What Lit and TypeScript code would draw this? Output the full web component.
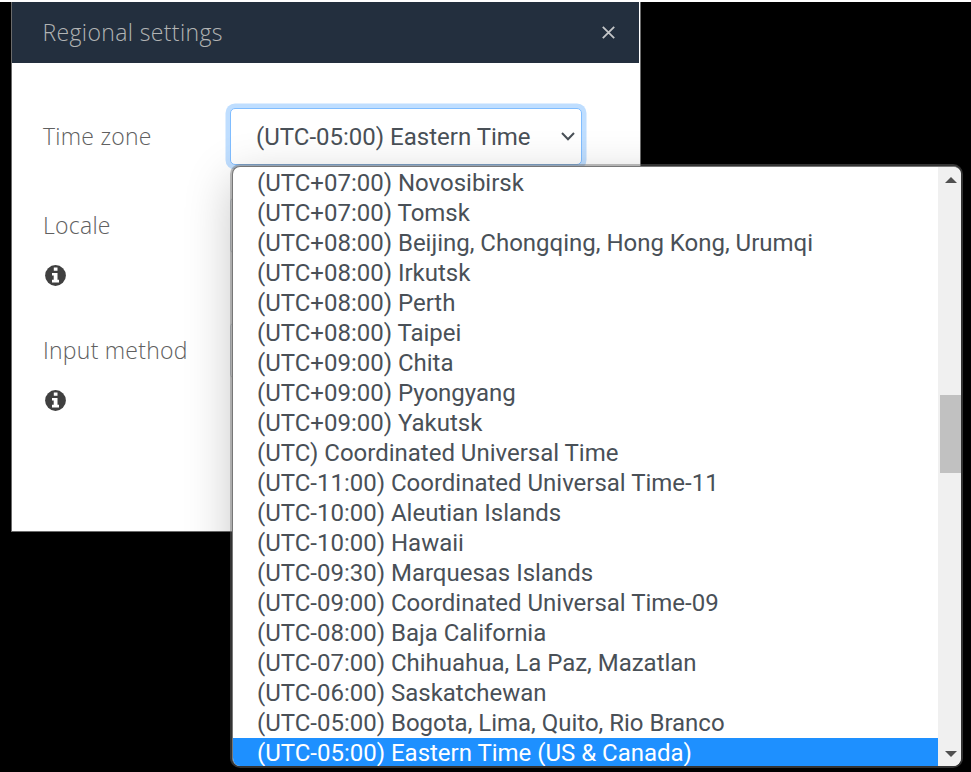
import { LitElement, html, css, svg } from "lit";
import { customElement, state } from "lit/decorators.js";
import { classMap } from "lit/directives/class-map.js";

const ZONES = [
  "(UTC+07:00) Novosibirsk",
  "(UTC+07:00) Tomsk",
  "(UTC+08:00) Beijing, Chongqing, Hong Kong, Urumqi",
  "(UTC+08:00) Irkutsk",
  "(UTC+08:00) Perth",
  "(UTC+08:00) Taipei",
  "(UTC+09:00) Chita",
  "(UTC+09:00) Pyongyang",
  "(UTC+09:00) Yakutsk",
  "(UTC) Coordinated Universal Time",
  "(UTC-11:00) Coordinated Universal Time-11",
  "(UTC-10:00) Aleutian Islands",
  "(UTC-10:00) Hawaii",
  "(UTC-09:30) Marquesas Islands",
  "(UTC-09:00) Coordinated Universal Time-09",
  "(UTC-08:00) Baja California",
  "(UTC-07:00) Chihuahua, La Paz, Mazatlan",
  "(UTC-06:00) Saskatchewan",
  "(UTC-05:00) Bogota, Lima, Quito, Rio Branco",
  "(UTC-05:00) Eastern Time (US & Canada)",
];

@customElement("zone-menu")
export class ZoneMenu extends LitElement {
  @state() selected = ZONES.length - 1;

  static styles = css`
    :host {
      display: flex;
      box-sizing: border-box;
      overflow: hidden;
      background: #fff;
      border-radius: 8px;
      font: 24px/30px Roboto, sans-serif;
      letter-spacing: -0.01px;
      color: #495057;
    }
    .list {
      flex: 1;
      padding-top: 1px;
      overflow: hidden;
    }
    .item {
      height: 30px;
      padding-left: 24px;
      white-space: nowrap;
    }
    .item.selected {
      background: #1e90ff;
      color: #fff;
    }
    .bar {
      width: 23px;
      background: #f0f0f0;
      display: flex;
      flex-direction: column;
      align-items: center;
    }
    .arrow {
      display: block;
      width: 12px;
      height: 6px;
      fill: #505050;
      margin: 10px 0 9px 2px;
    }
    .track {
      flex: 1;
      width: 100%;
      padding: 203px 0 0 2px;
      box-sizing: border-box;
    }
    .thumb {
      height: 78px;
      background: #c1c1c1;
    }
  `;

  render() {
    return html`
      <div class="list">
        ${ZONES.map(
          (z, i) => html`<div class=${classMap({ item: true, selected: i === this.selected })} @click=${() => (this.selected = i)}>${z}</div>`
        )}
      </div>
      <div class="bar">
        <svg class="arrow" viewBox="0 0 12 6"><path d="M0 6L6 0L12 6Z" /></svg>
        <div class="track"><div class="thumb"></div></div>
        <svg class="arrow" viewBox="0 0 12 6"><path d="M0 0L6 6L12 0Z" /></svg>
      </div>
    `;
  }
}

const infoIcon = html`<svg class="info" viewBox="0 0 21 21">
  ${svg`<circle cx="10.5" cy="10.5" r="10.4" fill="#404040" />
  <path fill="#fff" d="M8.8 2.6h3.7v3.1H8.8zM7 7.9h5.5v6.9H14v2.6H7v-2.6h1.7v-4.3H7z" />`}
</svg>`;

@customElement("app-root")
export class AppRoot extends LitElement {
  static styles = css`
    :host {
      display: block;
      position: relative;
      box-sizing: border-box;
      width: 971px;
      height: 772px;
      overflow: hidden;
      background: #000;
      border-top: 2px solid #fff;
      font-family: "Open Sans", "Noto Sans", sans-serif;
      font-weight: 300;
    }
    .dialog {
      box-sizing: border-box;
      width: 630px;
      height: 530px;
      margin-left: 11px;
      border: 1px solid #6b6b6b;
      border-top: 0;
      background: #fff;
    }
    .header {
      box-sizing: border-box;
      height: 61px;
      width: 627px;
      padding: 0 24px 0 30.5px;
      display: flex;
      align-items: center;
      justify-content: space-between;
      background: #232f3e;
      color: #b2b4b4;
    }
    .title,
    .label {
      font-size: 23px;
      line-height: 30px;
      padding-bottom: 2px;
      white-space: nowrap;
    }
    .title {
      letter-spacing: 0.37px;
    }
    .label {
      letter-spacing: 0.25px;
      color: #606060;
    }
    .close {
      width: 13px;
      height: 13px;
      stroke: #c4c6c8;
      stroke-width: 1.8;
    }
    .form {
      padding: 40px 0 0 31px;
    }
    .row {
      display: flex;
      align-items: center;
      height: 67px;
    }
    .row .label,
    .caption {
      width: 187px;
    }
    .field {
      display: flex;
      align-items: flex-start;
      height: 125px;
    }
    .caption {
      padding-top: 40px;
    }
    .info {
      display: block;
      width: 21px;
      height: 21px;
      margin: 23px 0 0 2px;
    }
    .select {
      box-sizing: border-box;
      width: 352px;
      height: 57px;
      padding: 0 6px 0 25px;
      border: 1px solid #ced4da;
      border-radius: 5px;
      background: #fff;
      display: flex;
      align-items: center;
      justify-content: space-between;
      font: 24px/30px Roboto, sans-serif;
      color: #495057;
    }
    .field .select {
      margin-top: 27px;
    }
    .select.focused {
      border-color: #80bdff;
      box-shadow: 0 0 0 4.5px #bfdeff;
    }
    .chevron {
      width: 14px;
      height: 9px;
      fill: none;
      stroke: #495057;
      stroke-width: 2;
    }
    .menu {
      position: absolute;
      left: 232px;
      top: 164px;
      width: 729px;
      height: 600px;
      border-left: 1px solid #777;
      border-top: 1px solid #777;
      box-shadow: 0 0 0 2px rgba(111, 111, 111, 0.46), 0 13px 48px rgba(0, 0, 0, 0.23);
    }
  `;

  render() {
    return html`
      <div class="dialog">
        <div class="header">
          <span class="title">Regional settings</span>
          <svg class="close" viewBox="0 0 13 13"><path d="M.8.8L12.2 12.2M12.2.8L.8 12.2" /></svg>
        </div>
        <div class="form">
          <div class="row">
            <div class="label">Time zone</div>
            <div class="select focused">
              <span>(UTC-05:00) Eastern Time</span>
              <svg class="chevron" viewBox="0 0 14 9"><path d="M1 1L7 7.2L13 1" /></svg>
            </div>
          </div>
          ${["Locale", "Input method"].map(
            (name) => html`<div class="field">
              <div class="caption"><div class="label">${name}</div>${infoIcon}</div>
              <div class="select"></div>
            </div>`
          )}
        </div>
      </div>
      <zone-menu class="menu"></zone-menu>
    `;
  }
}
